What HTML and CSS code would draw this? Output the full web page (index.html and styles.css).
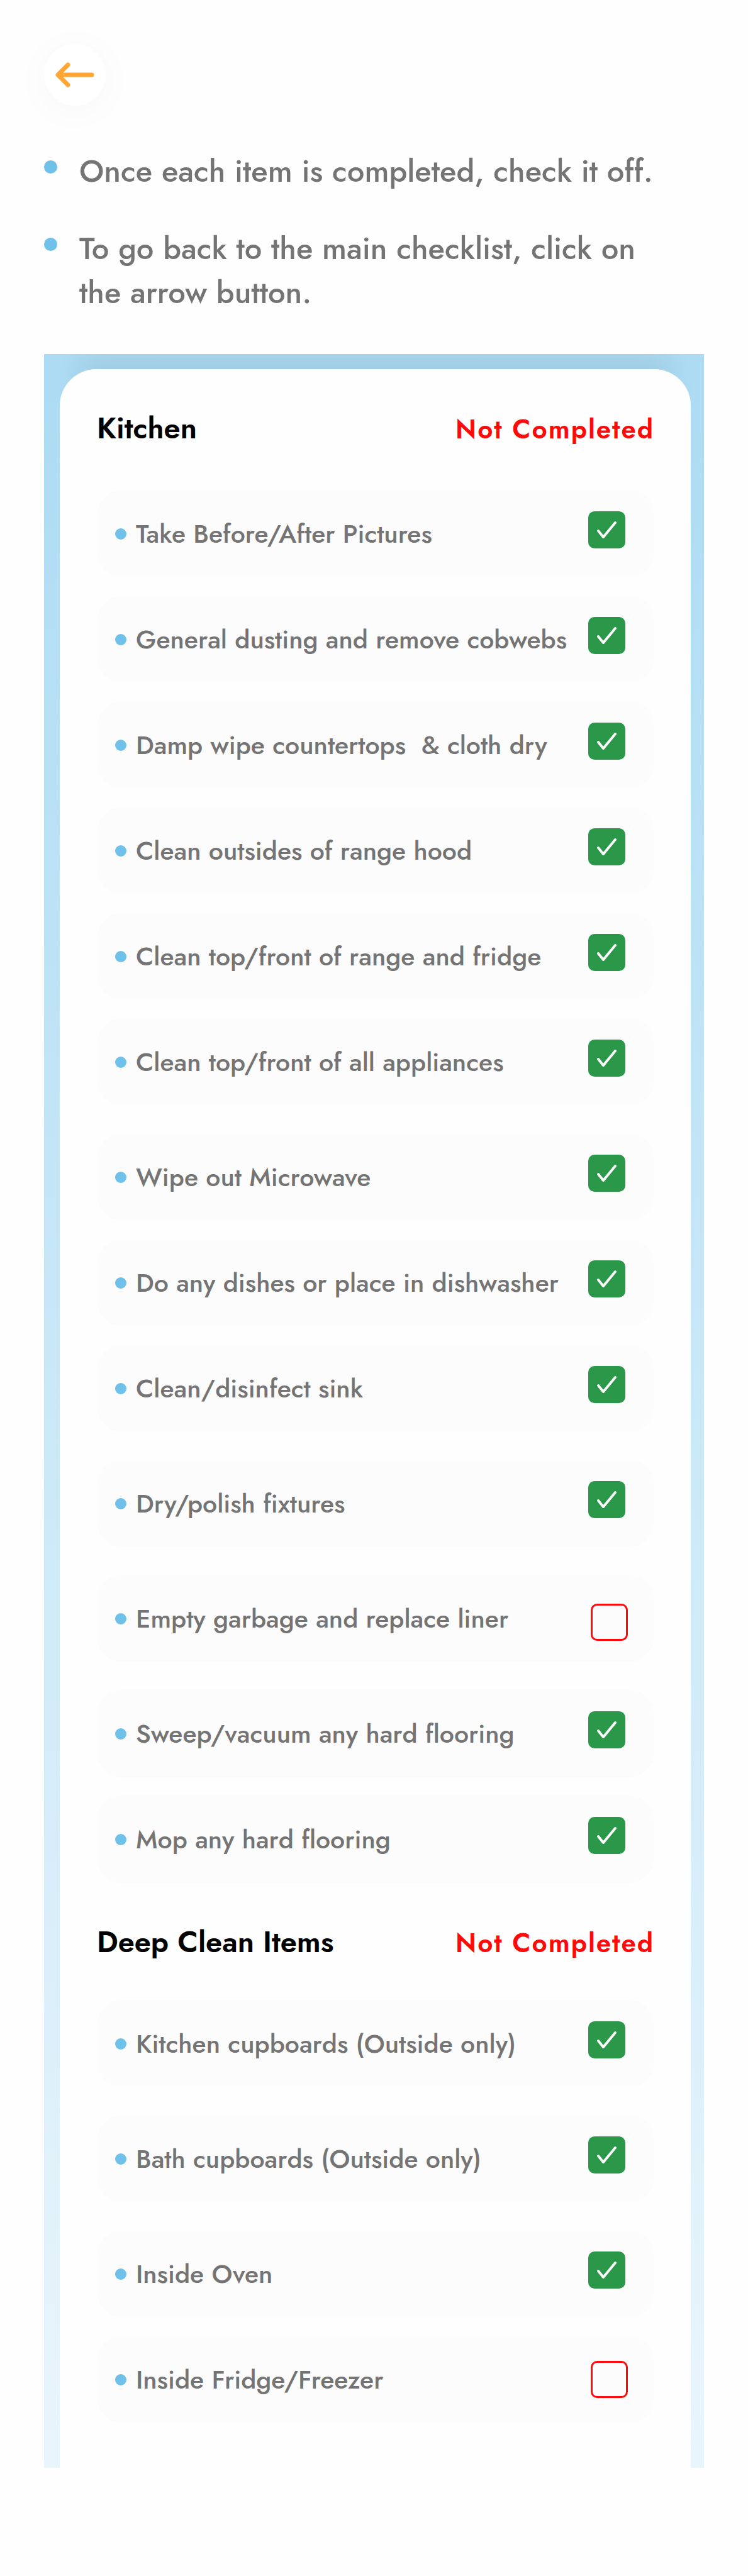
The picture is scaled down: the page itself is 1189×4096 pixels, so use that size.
FILE: index.html
```html
<!DOCTYPE html>
<html lang="en">
<head>
  <meta charset="utf-8">
  <meta name="viewport" content="width=device-width, initial-scale=1">
  <title>Kitchen checklist</title>
  <link rel="stylesheet" href="styles.css">
</head>
<body>
  <header class="topbar">
    <button class="back" type="button" aria-label="Back to the main checklist">
      <svg class="back-icon" viewBox="0 0 62 40" aria-hidden="true">
        <path d="M58 20H5M20 4L4 20l16 16"/>
      </svg>
    </button>
  </header>

  <ul class="notes">
    <li class="note">Once each item is completed, check it off.</li>
    <li class="note">To go back to the main checklist, click on<br>the arrow button.</li>
  </ul>

  <main class="panel">
    <div class="card">
      <section class="section">
        <div class="section-head">
          <h2 class="section-title">Kitchen</h2>
          <p class="status">Not Completed</p>
        </div>
        <ul class="items">
          <li class="item"><label class="row"><span class="text">Take Before/After Pictures</span><input class="check" type="checkbox" checked></label></li>
          <li class="item"><label class="row"><span class="text">General dusting and remove cobwebs</span><input class="check" type="checkbox" checked></label></li>
          <li class="item"><label class="row"><span class="text">Damp wipe countertops  &amp; cloth dry</span><input class="check" type="checkbox" checked></label></li>
          <li class="item"><label class="row"><span class="text">Clean outsides of range hood</span><input class="check" type="checkbox" checked></label></li>
          <li class="item"><label class="row"><span class="text">Clean top/front of range and fridge</span><input class="check" type="checkbox" checked></label></li>
          <li class="item"><label class="row"><span class="text">Clean top/front of all appliances</span><input class="check" type="checkbox" checked></label></li>
          <li class="item item-apart"><label class="row"><span class="text">Wipe out Microwave</span><input class="check" type="checkbox" checked></label></li>
          <li class="item"><label class="row"><span class="text">Do any dishes or place in dishwasher</span><input class="check" type="checkbox" checked></label></li>
          <li class="item"><label class="row"><span class="text">Clean/disinfect sink</span><input class="check" type="checkbox" checked></label></li>
          <li class="item item-apart"><label class="row"><span class="text">Dry/polish fixtures</span><input class="check" type="checkbox" checked></label></li>
          <li class="item item-apart"><label class="row"><span class="text">Empty garbage and replace liner</span><input class="check check-low" type="checkbox"></label></li>
          <li class="item item-apart"><label class="row"><span class="text">Sweep/vacuum any hard flooring</span><input class="check" type="checkbox" checked></label></li>
          <li class="item"><label class="row"><span class="text">Mop any hard flooring</span><input class="check" type="checkbox" checked></label></li>
        </ul>
      </section>

      <section class="section section-deep">
        <div class="section-head">
          <h2 class="section-title">Deep Clean Items</h2>
          <p class="status">Not Completed</p>
        </div>
        <ul class="items">
          <li class="item"><label class="row"><span class="text">Kitchen cupboards (Outside only)</span><input class="check" type="checkbox" checked></label></li>
          <li class="item item-apart"><label class="row"><span class="text">Bath cupboards (Outside only)</span><input class="check" type="checkbox" checked></label></li>
          <li class="item item-apart"><label class="row"><span class="text">Inside Oven</span><input class="check" type="checkbox" checked></label></li>
          <li class="item"><label class="row"><span class="text">Inside Fridge/Freezer</span><input class="check" type="checkbox"></label></li>
        </ul>
      </section>
    </div>
  </main>
</body>
</html>
```
FILE: styles.css
```css
* {
  box-sizing: border-box;
}

body {
  margin: 0;
  padding: 70px 70px 172px;
  background: #fefefe;
  color: #747474;
  font-family: Jost, Lato, sans-serif;
  font-weight: 500;
}

h2,
p,
ul {
  margin: 0;
  padding: 0;
}

ul {
  list-style: none;
}

/* Back button */
.topbar {
  display: flex;
}

.back {
  display: flex;
  align-items: center;
  justify-content: center;
  width: 98px;
  height: 98px;
  padding: 0;
  border: 0;
  border-radius: 50%;
  background: #fff;
  box-shadow: 0 8px 60px rgba(0, 0, 0, 0.03);
  cursor: pointer;
}

.back-icon {
  width: 62px;
  height: 40px;
  fill: none;
  stroke: #ffa635;
  stroke-width: 7;
  stroke-linecap: round;
  stroke-linejoin: round;
}

/* Instructions */
.notes {
  display: grid;
  gap: 53px;
  margin-top: 69px;
}

.note {
  display: flex;
  gap: 35px;
  font-size: 49px;
  line-height: 70px;
}

.note::before {
  content: "";
  flex: none;
  width: 21px;
  height: 21px;
  margin-top: 18px;
  border-radius: 50%;
  background: #6fc1ea;
}

/* Checklist */
.panel {
  margin-top: 63px;
  padding: 24px 21px 0 25px;
  overflow: hidden;
  background: linear-gradient(#acdbf3, #e9f5fc);
}

.card {
  padding: 62px 58px 71px 59px;
  border-radius: 58px 58px 0 0;
  background: #fefefe;
  box-shadow: 0 -60px 40px -30px rgba(0, 0, 0, 0.06);
}

.section-deep {
  margin-top: 62px;
}

.section-head {
  display: flex;
  align-items: baseline;
  justify-content: space-between;
  margin-bottom: 66px;
}

.section-deep .section-head {
  margin-bottom: 60px;
}

.section-title {
  color: #000;
  font-size: 47px;
  font-weight: 600;
  line-height: 64px;
}

.status {
  color: #ff0a0a;
  font-size: 42px;
  font-weight: 600;
  line-height: 56px;
  letter-spacing: 2px;
}

.item + .item {
  margin-top: 29px;
}

.item + .item-apart {
  margin-top: 44px;
}

.row {
  display: flex;
  align-items: center;
  min-height: 139px;
  padding: 34px 46px 34px 29px;
  border-radius: 40px;
  background: #fcfcfc;
  cursor: pointer;
}

.row::before {
  content: "";
  flex: none;
  width: 18px;
  height: 18px;
  margin-right: 15px;
  border-radius: 50%;
  background: #6fc1ea;
}

.text {
  flex: 1;
  font-size: 41px;
  line-height: 56px;
  white-space: pre-wrap;
}

.check {
  flex: none;
  appearance: none;
  width: 59px;
  height: 59px;
  margin: 0 -4px 0 0;
  border: 3px solid #ff0a0a;
  border-radius: 10px;
  cursor: pointer;
}

.check-low {
  align-self: flex-end;
}

.check:checked {
  align-self: flex-start;
  margin-right: 0;
  border: 0;
  background: #2b9849 url("data:image/svg+xml,%3Csvg xmlns='http://www.w3.org/2000/svg' viewBox='0 0 59 59'%3E%3Cpath d='M16 31l8 10 19-23' fill='none' stroke='%23fff' stroke-width='4' stroke-linecap='round' stroke-linejoin='round'/%3E%3C/svg%3E") center / 100%;
}
```
